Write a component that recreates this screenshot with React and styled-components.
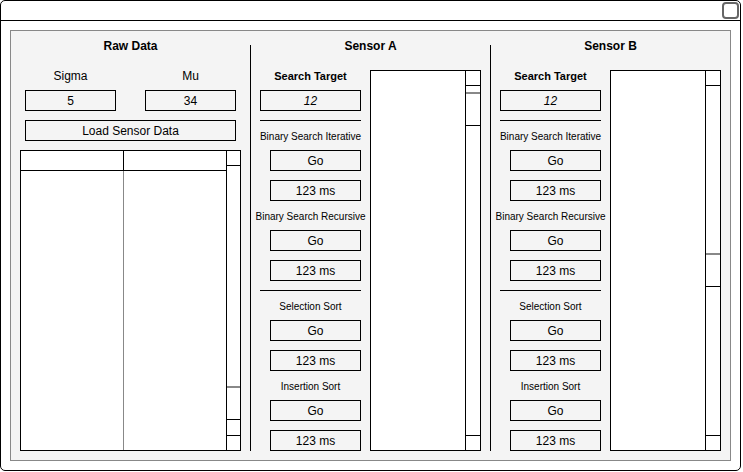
import React from 'react';
import styled, { createGlobalStyle } from 'styled-components';

const GlobalStyle = createGlobalStyle`
  body {
    margin: 0;
    background: #fff;
    font-family: "Liberation Sans", Arial, sans-serif;
    color: #000;
  }
`;

const Window = styled.div`
  box-sizing: border-box;
  width: 741px;
  height: 471px;
  border: 1px solid #000;
  border-radius: 5px;
  background: #fff;
  display: flex;
  flex-direction: column;
`;

const TitleBar = styled.div`
  box-sizing: border-box;
  height: 20px;
  border-bottom: 1px solid #000;
  display: flex;
  justify-content: flex-end;
  align-items: center;
  padding-bottom: 1px;
`;

const CloseButton = styled.div`
  box-sizing: border-box;
  width: 17px;
  height: 17px;
  border: 2px solid #666;
  border-radius: 4px;
  margin-right: 1px;
`;

const Body = styled.div`
  flex: 1;
  padding: 9px;
  display: flex;
`;

const Panel = styled.div`
  box-sizing: border-box;
  flex: 1;
  border: 1px solid #888;
  background: #f4f4f4;
  display: grid;
  grid-template-columns: 239px 1px 239px 1px 239px;
`;

const Divider = styled.div`
  margin-top: 14px;
  height: 406px;
  background: #000;
`;

const Column = styled.div`
  display: flex;
  flex-direction: column;
`;

const Title = styled.div`
  box-sizing: border-box;
  height: 30px;
  padding-top: 1px;
  line-height: 29px;
  text-align: center;
  font-size: 12px;
  font-weight: bold;
`;

const FieldRow = styled.div`
  display: flex;
  gap: 29px;
  padding: 0 14px;
`;

const Field = styled.div`
  display: flex;
  flex-direction: column;
  width: 91px;
`;

const Label = styled.div`
  box-sizing: border-box;
  height: 29px;
  padding-top: ${p => (p.$small ? 2 : 1)}px;
  line-height: ${p => (p.$small ? 27 : 28)}px;
  display: flex;
  justify-content: center;
  font-size: ${p => (p.$small ? '10px' : p.$bold ? '11px' : '12px')};
  font-weight: ${p => (p.$bold ? 'bold' : 'normal')};
  white-space: nowrap;
`;

const Box = styled.div`
  box-sizing: border-box;
  height: 21px;
  width: ${p => p.$width || 91}px;
  margin-top: ${p => p.$gap || 0}px;
  margin-left: ${p => p.$indent || 0}px;
  border: 1px solid #000;
  padding-top: 1px;
  line-height: 19px;
  text-align: center;
  font-size: 12px;
  font-style: ${p => (p.$italic ? 'italic' : 'normal')};
`;

const LoadButton = styled(Box)`
  margin: 9px 14px 0;
`;

const Table = styled.div`
  box-sizing: border-box;
  margin: 9px 9px 0;
  height: 301px;
  border: 1px solid #000;
  background: #fff;
  display: flex;
`;

const TableData = styled.div`
  flex: 1;
  display: flex;
  flex-direction: column;
`;

const TableHeader = styled.div`
  box-sizing: border-box;
  height: 20px;
  border-bottom: 1px solid #000;
  display: flex;
`;

const TableBody = styled.div`
  flex: 1;
  display: flex;
`;

const Cell = styled.div`
  flex: 1;
  border-right: ${p => (p.$divider ? `1px solid ${p.$divider}` : 'none')};
`;

const Scrollbar = styled.div`
  box-sizing: border-box;
  width: ${p => p.$width}px;
  border-left: 1px solid #000;
  display: flex;
  flex-direction: column;
`;

const Arrow = styled.div`
  box-sizing: border-box;
  height: 15px;
  border-top: ${p => (p.$bottom ? '1px solid #000' : 'none')};
  border-bottom: ${p => (p.$bottom ? 'none' : '1px solid #000')};
`;

const Track = styled.div`
  flex: 1;
`;

const Thumb = styled.div`
  box-sizing: border-box;
  height: 34px;
  border-top: 2px solid #888;
  border-bottom: 1px solid #000;
`;

const SensorBody = styled.div`
  display: flex;
  gap: 9px;
  padding: 0 9px;
`;

const Controls = styled.div`
  width: 101px;
  display: flex;
  flex-direction: column;
`;

const Rule = styled.div`
  margin-top: 9px;
  height: 1px;
  background: #000;
`;

const ListBox = styled.div`
  box-sizing: border-box;
  margin-top: 9px;
  width: 111px;
  height: 381px;
  border: 1px solid #000;
  background: #fff;
  display: flex;
  justify-content: flex-end;
`;

function ScrollBar({ width, thumbAt }) {
  return (
    <Scrollbar $width={width}>
      <Arrow />
      <Track>
        <Thumb style={{ marginTop: thumbAt }} />
      </Track>
      <Arrow $bottom />
    </Scrollbar>
  );
}

const algorithms = [
  { name: 'Binary Search Iterative' },
  { name: 'Binary Search Recursive', rule: true },
  { name: 'Selection Sort' },
  { name: 'Insertion Sort' },
];

function Sensor({ name, thumbAt }) {
  return (
    <Column>
      <Title>{name}</Title>
      <SensorBody>
        <Controls>
          <Label $bold>Search Target</Label>
          <Box $width={101} $italic>12</Box>
          <Rule />
          {algorithms.map(a => (
            <React.Fragment key={a.name}>
              <Label $small>{a.name}</Label>
              <Box $indent={10}>Go</Box>
              <Box $indent={10} $gap={9}>123 ms</Box>
              {a.rule && <Rule />}
            </React.Fragment>
          ))}
        </Controls>
        <ListBox>
          <ScrollBar width={15} thumbAt={thumbAt} />
        </ListBox>
      </SensorBody>
    </Column>
  );
}

function RawData() {
  return (
    <Column>
      <Title>Raw Data</Title>
      <FieldRow>
        <Field>
          <Label>Sigma</Label>
          <Box>5</Box>
        </Field>
        <Field>
          <Label>Mu</Label>
          <Box>34</Box>
        </Field>
      </FieldRow>
      <LoadButton $width={211}>Load Sensor Data</LoadButton>
      <Table>
        <TableData>
          <TableHeader>
            <Cell $divider="#000" />
            <Cell />
          </TableHeader>
          <TableBody>
            <Cell $divider="#888" />
            <Cell />
          </TableBody>
        </TableData>
        <ScrollBar width={14} thumbAt={220} />
      </Table>
    </Column>
  );
}

export default function App() {
  return (
    <>
      <GlobalStyle />
      <Window>
        <TitleBar>
          <CloseButton />
        </TitleBar>
        <Body>
          <Panel>
            <RawData />
            <Divider />
            <Sensor name="Sensor A" thumbAt={6} />
            <Divider />
            <Sensor name="Sensor B" thumbAt={167} />
          </Panel>
        </Body>
      </Window>
    </>
  );
}
